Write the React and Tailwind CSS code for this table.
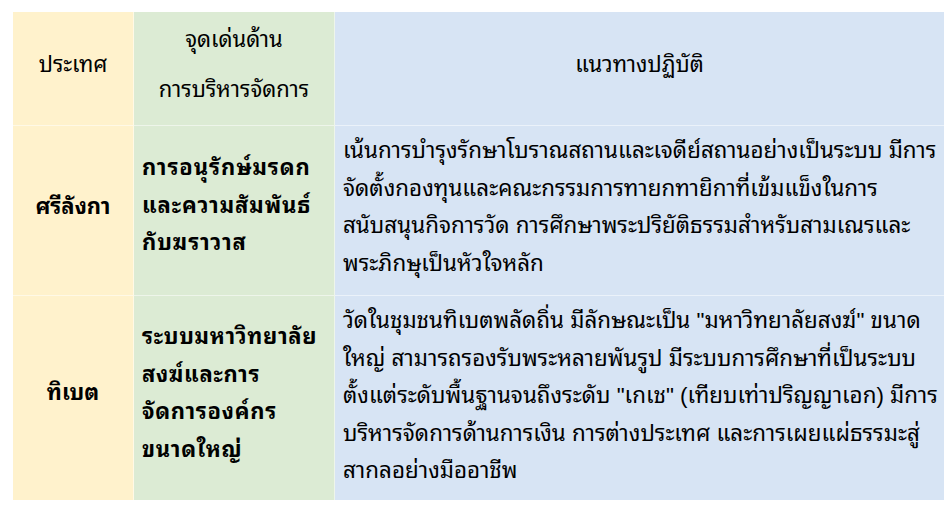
export default function App() {
  const font = { fontFamily: '"Liberation Sans", "Noto Sans Thai Looped", sans-serif' };
  return (
    <div className="w-[952px] h-[507px] bg-white pt-[12px] pl-[13px]" style={font}>
      <div className="grid grid-cols-[121px_201px_609px] grid-rows-[114px_170px_204px] text-[22px] text-black">
        <div className="bg-[#fff2cc] border-b border-r border-white/50 flex items-center justify-center pb-[8px]">ประเทศ</div>
        <div className="bg-[#dcebd4] border-b border-r border-white/50 flex flex-col items-center justify-center leading-[48px] pb-[10px]">
          <span>จุดเด่นด้าน</span>
          <span className="relative top-[2px]">การบริหารจัดการ</span>
        </div>
        <div className="bg-[#d7e4f4] border-b border-white/50 flex items-center justify-center pb-[8px]">แนวทางปฏิบัติ</div>

        <div className="bg-[#fff2cc] border-b border-r border-white/50 flex items-center justify-center font-bold pb-[8px]">ศรีลังกา</div>
        <div className="bg-[#dcebd4] border-b border-r border-white/50 flex flex-col justify-center pl-[8px] font-bold leading-[37.5px] pb-[10px] whitespace-nowrap tracking-[0.9px]">
          <span>การอนุรักษ์มรดก</span>
          <span>และความสัมพันธ์</span>
          <span>กับฆราวาส</span>
        </div>
        <div className="bg-[#d7e4f4] border-b border-white/50 pl-[8px] pt-[6px] leading-[37.5px] whitespace-nowrap text-[22.4px]">
          <div>เน้นการบำรุงรักษาโบราณสถานและเจดีย์สถานอย่างเป็นระบบ มีการ</div>
          <div>จัดตั้งกองทุนและคณะกรรมการทายกทายิกาที่เข้มแข็งในการ</div>
          <div>สนับสนุนกิจการวัด การศึกษาพระปริยัติธรรมสำหรับสามเณรและ</div>
          <div>พระภิกษุเป็นหัวใจหลัก</div>
        </div>

        <div className="bg-[#fff2cc] border-r border-white/50 flex items-center justify-center font-bold pb-[12px]">ทิเบต</div>
        <div className="bg-[#dcebd4] border-r border-white/50 flex flex-col justify-center pl-[8px] font-bold leading-[37.5px] pb-[10px] whitespace-nowrap tracking-[0.7px]">
          <span>ระบบมหาวิทยาลัย</span>
          <span>สงฆ์และการ</span>
          <span>จัดการองค์กร</span>
          <span>ขนาดใหญ่</span>
        </div>
        <div className="bg-[#d7e4f4] pl-[8px] pt-[6px] leading-[37.5px] whitespace-nowrap text-[22.4px]">
          <div>วัดในชุมชนทิเบตพลัดถิ่น มีลักษณะเป็น "มหาวิทยาลัยสงฆ์" ขนาด</div>
          <div>ใหญ่ สามารถรองรับพระหลายพันรูป มีระบบการศึกษาที่เป็นระบบ</div>
          <div>ตั้งแต่ระดับพื้นฐานจนถึงระดับ "เกเช" (เทียบเท่าปริญญาเอก) มีการ</div>
          <div>บริหารจัดการด้านการเงิน การต่างประเทศ และการเผยแผ่ธรรมะสู่</div>
          <div>สากลอย่างมืออาชีพ</div>
        </div>
      </div>
    </div>
  );
}
